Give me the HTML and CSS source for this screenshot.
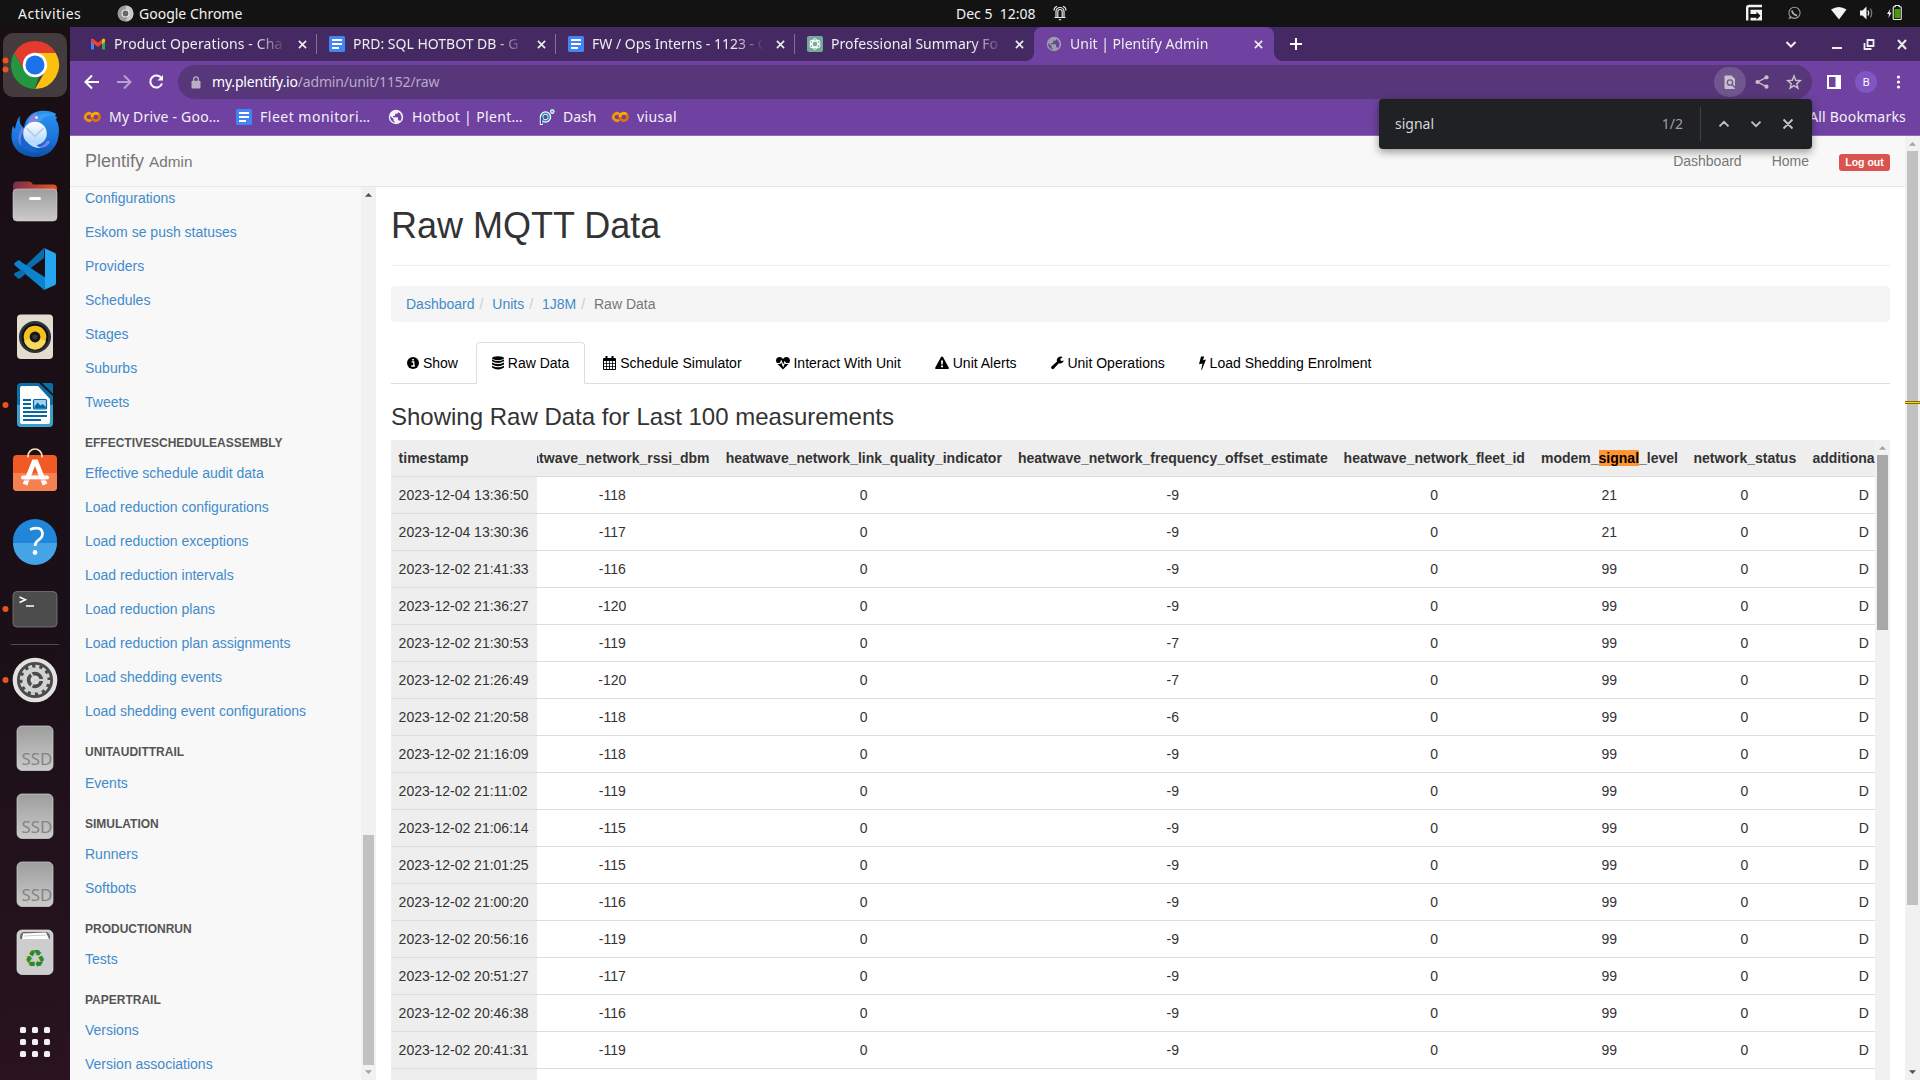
FILE: index.html
```html
<!DOCTYPE html>
<html lang="en">
<head>
<meta charset="utf-8">
<title>Unit | Plentify Admin</title>
<link rel="stylesheet" href="styles.css">
</head>
<body>
<svg class="defs" width="0" height="0" aria-hidden="true">
  <defs>
    <linearGradient id="gGrey" x1="0" y1="0" x2="0" y2="1"><stop offset="0" stop-color="#9d9d9d"/><stop offset="1" stop-color="#cbcbcb"/></linearGradient>
    <linearGradient id="gFolder" x1="0" y1="0" x2="1" y2="0"><stop offset="0" stop-color="#7a2e4e"/><stop offset="1" stop-color="#e95420"/></linearGradient>
    <linearGradient id="gBird" x1="0" y1="0" x2="0" y2="1"><stop offset="0" stop-color="#2a94ee"/><stop offset=".6" stop-color="#1b74dc"/><stop offset="1" stop-color="#0d4fa8"/></linearGradient>
    <linearGradient id="gMail" x1="0" y1="0" x2="0" y2="1"><stop offset="0" stop-color="#fff"/><stop offset="1" stop-color="#a9d4fb"/></linearGradient>
    <symbol id="docs" viewBox="0 0 16 16"><rect width="16" height="16" rx="1.5" fill="#4285f4"/><path d="M3 4h10M3 8h10M3 12h7" stroke="#fff" stroke-width="1.8"/></symbol>
    <symbol id="colab" viewBox="0 0 18 16"><g fill="none" stroke-width="2.7"><path d="M8.2 5.2a3.6 3.6 0 1 0 0 5.6" stroke="#f29900"/><circle cx="12.8" cy="8" r="3.7" stroke="#e8710a"/><path d="M9 8a3.7 3.7 0 0 1 6.5-2.5" stroke="#f9ab00"/></g></symbol>
    <symbol id="globe" viewBox="0 0 16 16"><path fill="currentColor" fill-rule="evenodd" d="M8 .8a7.2 7.2 0 1 0 0 14.400A7.200 7.200 0 0 0 8 .8zM2.300 7l3.200 3v1.200c0 .8.600 1.300 1.300 1.300v1.200A5.800 5.800 0 0 1 2.300 7zm9.800 5.200c-.2-.6-.7-1-1.400-1H10V9c0-.4-.3-.7-.7-.7H5V6.900h1.400c.4 0 .7-.3.7-.7V4.800h1.500c.8 0 1.400-.6 1.400-1.400v-.3a5.800 5.800 0 0 1 2.100 9.100z"/></symbol>
    <symbol id="close" viewBox="0 0 10 10"><path d="M1 1l8 8M9 1L1 9" stroke="currentColor" stroke-width="1.8" fill="none"/></symbol>
    <symbol id="ssd" viewBox="0 0 70 68"><rect x="17" y="12" width="36" height="44.500" rx="5" fill="url(#gGrey)" stroke="#d4d4d4" stroke-width=".7"/><text x="21.500" y="50.500" font-size="15.500" fill="#858585" textLength="31" lengthAdjust="spacingAndGlyphs">SSD</text></symbol>
    <symbol id="up" viewBox="0 0 15 15"><path d="M4 9.700L7.500 6 11 9.700z" fill="currentColor"/></symbol>
    <symbol id="down" viewBox="0 0 15 15"><path d="M4 5.300L7.500 9 11 5.300z" fill="currentColor"/></symbol>
  </defs>
</svg>

<header class="topbar">
  <span class="activities">Activities</span>
  <span class="app"><svg width="17" height="17" viewBox="0 0 17 17"><circle cx="8.500" cy="8.500" r="8" fill="#9a9a9a"/><path d="M8.500.5a8 8 0 0 1 0 16l4-7.500L9 4z" fill="#c9c9c9"/><circle cx="8.500" cy="8.500" r="4" fill="#eee"/><circle cx="8.500" cy="8.500" r="2.900" fill="#666"/></svg><b>Google Chrome</b></span>
  <span class="clock"><b>Dec 5&nbsp; 12:08</b><svg width="14" height="17" viewBox="0 0 14 17" fill="none" stroke="#e8e8e8" stroke-width="1.200"><path d="M1.500 12.500h11M3 12V6.500a4 4 0 0 1 8 0V12M4.800 12V6.700a2.200 2.200 0 0 1 4.400 0V12M1 5.500A4.500 4.500 0 0 1 4 1.300M13 5.500a4.500 4.500 0 0 0-3-4.200"/><path d="M5.500 14h3L7 15.800z" fill="#e8e8e8" stroke="none"/></svg></span>
  <svg class="tray" width="160" height="27" viewBox="0 0 160 27">
    <path d="M4.200 20.500V8q0-2 2-2H19" fill="none" stroke="#f2f2f2" stroke-width="2.400"/><path d="M7.500 9.800H19V20.500H7.500v-2.800h6v2l4-4-4-4v2.200h-6z" fill="#f2f2f2"/>
    <circle cx="51.500" cy="12.800" r="5.600" fill="none" stroke="#9a9a9a" stroke-width="1.100"/><path d="M45.500 19.200l1-3 2 2z" fill="#9a9a9a"/><path d="M49 10.500q.5 4 5 5" fill="none" stroke="#b5b5b5" stroke-width="1.800"/>
    <path d="M88 9.500q8-5 15.500 0L96 19.500z" fill="#f2f2f2"/>
    <path d="M117 10.500h2.500l4-4v13l-4-4H117z" fill="#f2f2f2"/><path d="M125 10.500q1.500 2.500 0 5" fill="none" stroke="#f2f2f2" stroke-width="1.300"/><path d="M127.300 8.500q2.700 4.500 0 9" fill="none" stroke="#777" stroke-width="1.300"/>
    <path d="M147.500 8.500l-3.500 5.500h2l-.5 4 3-5.500h-2z" fill="#f2f2f2"/><path d="M150.200 7.500q0-.8.800-.8h1.200V5.500h4v1.200h1.200q.8 0 .8.800v11.200q0 .8-.8.800h-6.400q-.8 0-.8-.8z" fill="none" stroke="#f2f2f2" stroke-width="1.100"/><rect x="151.500" y="9" width="5.500" height="9" fill="#4e9a06"/>
  </svg>
</header>

<div class="screen">
<nav class="dock">
  <svg class="ico" viewBox="0 0 70 68"><rect x="3" y="2" width="64" height="64" rx="10" fill="#443b3f"/><circle cx="5.500" cy="29.500" r="3" fill="#e95420"/><circle cx="5.500" cy="38.500" r="3" fill="#e95420"/>
    <path d="M14.200 22A24 24 0 0 1 55.800 22H35L24.600 40z" fill="#e33b2e"/><path d="M14.200 22L24.600 40Q29 46 35 46l4 0-4.500 12A24 24 0 0 1 14.200 22z" fill="#23963f"/><path d="M55.800 22A24 24 0 0 1 35 58L45.400 40 45 28 35 22z" fill="#fcc10f"/><circle cx="35" cy="34" r="12.200" fill="#fff"/><circle cx="35" cy="34" r="9.500" fill="#1a73e8"/></svg>
  <svg class="ico" viewBox="0 0 70 68"><path d="M20 17c-1 5 0 9 4 12 1-8 6-16 16-17 6-.6 12 0 16 3l-1 2 2 1-1 3c3 4 3.500 10 2.500 16C57 50 47 58 35 58 21 58 12 49 11.500 38c0-4 .3-8 1.500-11l2 3c1-5 2-10 5-13z" fill="url(#gBird)"/><path d="M28 25c4-9 12-12 27-10l1 1c-6 0-11 1-14 5-3 3-8 2-14 4z" fill="#3d9cf2"/><path d="M27.500 25c1-5 4-9 9-11-1 3 0 5 2 6-3 3-7 3-11 5z" fill="#8a83dd"/><circle cx="36.500" cy="18.500" r="1.300" fill="#fff"/><path d="M23 30c-6 8-4 18 5 22 3 1.500 8 2 12 1-7-2-10-6-11-11z" fill="#1763cf"/><path d="M22 29c-4 6-5 13-1 18-1-8 0-12 4-17z" fill="#6f7ee6"/><path d="M47 42c-2 4-6 6-10 6 6 2 12-1 13-6z" fill="#7d84e8"/><circle cx="35" cy="34.500" r="11.800" fill="url(#gMail)"/><path d="M28 44c3 3 7 5 13 5-3-1-5-3-6-6z" fill="#b9dbfc"/><path d="M26.500 29l8.500 8.500 8.500-8.500" fill="none" stroke="#b4c8e2" stroke-width="1.400"/></svg>
  <svg class="ico" viewBox="0 0 70 68"><path d="M13 19q0-4.500 4-4.500h12q2 0 3 1.500l1 1.500h20q4 0 4 4V34H13z" fill="url(#gFolder)"/><rect x="13" y="22" width="44" height="32" rx="4" fill="url(#gGrey)" stroke="#d0d0d0" stroke-width=".6"/><rect x="29" y="30" width="12" height="3" rx="1.500" fill="#fff"/></svg>
  <svg class="ico" viewBox="0 0 70 68"><path d="M44 13L22 34l22 21V45L29.500 34 44 23z" fill="#0a6dae"/><path d="M22 27.500l-3-2.500-4 2.500q-1.500 1.500 0 3L44.500 55 46 43z" fill="#0b83cd"/><path d="M14.500 38q-1 1.500 0 2.500l3.500 3q1 .5 2 0l6-5-4-4z" fill="#0a6dae"/><path d="M44 13l11 5q1 .6 1 2v28q0 1.400-1 2l-11 5q1-1 1-3V16q0-2-1-3z" fill="#26a5f2"/></svg>
  <svg class="ico" viewBox="0 0 70 68"><rect x="17" y="11.500" width="36" height="44.500" rx="4" fill="#e3ddd0"/><circle cx="35" cy="34" r="16" fill="#2f3238"/><circle cx="35" cy="34" r="13.300" fill="#0e0f11"/><circle cx="35" cy="34" r="11.300" fill="#f2c11c"/><path d="M24 38a11.300 11.300 0 0 0 22 0l-11-4z" fill="#f8d85a"/><circle cx="35" cy="34" r="5.400" fill="#161616"/><circle cx="35" cy="34" r="2.500" fill="#3a3a3a"/></svg>
  <svg class="ico" viewBox="0 0 70 68"><circle cx="5.500" cy="34" r="3" fill="#e95420"/><path d="M21 12h18l14 13v27q0 4-4 4H21q-4 0-4-4V16q0-4 4-4z" fill="#0b6ea5"/><path d="M17 34h36v18q0 4-4 4H21q-4 0-4-4z" fill="#3c9fd0"/><path d="M22 15h16l12 13v23q0 2-2 2H22q-2 0-2-2V17q0-2 2-2z" fill="#fff"/><path d="M42 12h9q2 0 2 2v9z" fill="#0b6ea5"/><path d="M23 29h8M23 33h8M23 37h8M23 41h24M23 45h24M23 49h18" stroke="#0369a3" stroke-width="1.900"/><rect x="33.500" y="28.500" width="13" height="9.500" rx="1" fill="#a3d2ee" stroke="#0369a3" stroke-width="1.200"/><path d="M34.500 37.500v-2l3-4 3 3 2-1.500 3.500 3v1.500z" fill="#0369a3"/></svg>
  <svg class="ico" viewBox="0 0 70 68"><rect x="13" y="16" width="44" height="36" rx="4" fill="#f15a24"/><path d="M13 34h44v14q0 4-4 4H17q-4 0-4-4z" fill="#f58150"/><path d="M28 18.500V17a7 7 0 0 1 14 0v1.500" fill="none" stroke="#f9e2bf" stroke-width="1.700"/><path d="M25 45.500L34 23h2l9 22.500" fill="none" stroke="#fff" stroke-width="4.800"/><path d="M23 38.500h24" stroke="#fff" stroke-width="4" stroke-linecap="round"/><path d="M23 41h24" stroke="#f58150" stroke-width=".8"/></svg>
  <svg class="ico" viewBox="0 0 70 68"><circle cx="35" cy="34" r="22" fill="#1f86d9"/><path d="M13 36a22 22 0 0 0 44 0z" fill="#45a4e6"/><path d="M30 22.500q12-4 12.500 4 0 4-4 6.500-3.500 2.500-3.500 6" fill="none" stroke="#fff" stroke-width="2.700"/><circle cx="35" cy="45.500" r="2.400" fill="#fff"/></svg>
  <svg class="ico" viewBox="0 0 70 68"><circle cx="5.500" cy="34" r="3" fill="#e95420"/><rect x="13" y="16.500" width="44" height="35.500" rx="4" fill="#4c4c4c" stroke="#7b7b7b" stroke-width=".8"/><path d="M19.500 22l6 2.800-6 2.700M26 31h8" fill="none" stroke="#fff" stroke-width="1.500"/></svg>
  <hr>
  <svg class="ico" viewBox="0 0 70 68"><circle cx="5.500" cy="34" r="3" fill="#e95420"/><circle cx="35" cy="34" r="20.200" fill="#4b4b4b" stroke="#e2e2e2" stroke-width="4.300"/><circle cx="35" cy="34" r="13.700" fill="none" stroke="#d2d2d2" stroke-width="3" stroke-dasharray="4 3.170"/><circle cx="35" cy="34" r="10.400" fill="none" stroke="#d2d2d2" stroke-width="4.400"/><circle cx="35" cy="34" r="4.500" fill="#dcdcdc"/><path d="M35 34h10M35 34l-5 8.600M35 34l-5-8.600" stroke="#d2d2d2" stroke-width="1.800"/></svg>
  <svg class="ico"><use href="#ssd"/></svg>
  <svg class="ico"><use href="#ssd"/></svg>
  <svg class="ico"><use href="#ssd"/></svg>
  <svg class="ico" viewBox="0 0 70 68"><rect x="17" y="12" width="36" height="44.500" rx="5" fill="#cdcdcd" stroke="#e2e2e2" stroke-width=".7"/><path d="M20 21v-3q1-4 4-4h22q3 0 4 4v3z" fill="#6b6b6b"/><path d="M22 21l1-5.500 23-1L49 21z" fill="#fff"/><path d="M24 18l22-1" stroke="#bbb" stroke-width=".8"/><text x="35" y="48.500" font-size="24" fill="#2d8a1f" text-anchor="middle" class="recycle">♻</text></svg>
  <svg class="ico apps" viewBox="0 0 70 68" fill="#f2f2f2"><g id="r"><rect x="20" y="19" width="6" height="6" rx="1.600"/><rect x="32" y="19" width="6" height="6" rx="1.600"/><rect x="44" y="19" width="6" height="6" rx="1.600"/></g><use href="#r" y="12"/><use href="#r" y="24"/></svg>
</nav>

<main class="window">
  <div class="tabstrip">
    <div class="tab"><svg width="16" height="16" viewBox="0 0 16 16"><path d="M1 13.500V3.500h3v10z" fill="#4285f4"/><path d="M12 13.500V3.500h3v10z" fill="#34a853"/><path d="M1 3.500q1.500-2 3 0l4 3.300 4-3.300v4L8 11 1 5.800z" fill="#ea4335"/><path d="M12 3.500q1.500-2 3 0v2.300l-3 2.200z" fill="#fbbc04"/></svg><span class="wide">Product Operations - Cha</span><svg class="x"><use href="#close"/></svg></div>
    <div class="tab"><svg width="16" height="16"><use href="#docs"/></svg><span>PRD: SQL HOTBOT DB - G</span><svg class="x"><use href="#close"/></svg></div>
    <div class="tab"><svg width="16" height="16"><use href="#docs"/></svg><span>FW / Ops Interns - 1123 - G</span><svg class="x"><use href="#close"/></svg></div>
    <div class="tab last"><svg width="16" height="16" viewBox="0 0 16 16"><rect width="16" height="16" rx="2" fill="#74aa9c"/><g fill="none" stroke="#fff" stroke-width=".9"><ellipse cx="8" cy="8" rx="2.700" ry="5.400"/><ellipse cx="8" cy="8" rx="2.700" ry="5.400" transform="rotate(60 8 8)"/><ellipse cx="8" cy="8" rx="2.700" ry="5.400" transform="rotate(120 8 8)"/></g></svg><span>Professional Summary Fo</span><svg class="x"><use href="#close"/></svg></div>
    <div class="tab active"><svg class="dim" width="16" height="16"><use href="#globe"/></svg><span>Unit | Plentify Admin</span><svg class="x"><use href="#close"/></svg></div>
    <svg class="plus" width="14" height="14" viewBox="0 0 14 14"><path d="M7 1v12M1 7h12" stroke="#fff" stroke-width="2"/></svg>
    <svg class="winbtns" width="140" height="34" viewBox="0 0 140 34" fill="none" stroke="#eee" stroke-width="2"><path d="M6.500 15l4.500 4.500 4.500-4.500M52 21h10M118 13l8 9M126 13l-8 9"/><path d="M87.500 13h6v6h-6zM84.500 16v6h7" stroke-width="1.800"/></svg>
  </div>

  <div class="toolbar">
    <svg class="navbtns" width="108" height="38" viewBox="0 0 108 38" fill="none" stroke="#fff" stroke-width="2"><path d="M29 21H16M22 14.500L15.500 21l6.500 6.500"/><path d="M47 21h13M54 14.500l6.500 6.500-6.500 6.500" opacity=".5"/><path d="M91.500 17.500A6 6 0 1 0 92 22.500"/><path d="M93 14v5.500h-5.500z" fill="#fff" stroke="none"/></svg>
    <div class="omnibox">
      <svg width="10" height="13" viewBox="0 0 10 13"><rect x=".5" y="4.800" width="9" height="7.700" rx="1" fill="#b9b0c4"/><path d="M2.700 5V3.200a2.300 2.300 0 0 1 4.600 0V5" fill="none" stroke="#b9b0c4" stroke-width="1.300"/></svg>
      <span class="url"><b>my.plentify.io</b>/admin/unit/1152/raw</span>
      <svg class="omniicons" width="100" height="34" viewBox="0 0 100 34"><rect x="2" y="2" width="32" height="30" rx="15" fill="#70558f"/><path d="M13.500 10.500h6l3.500 3.500v10h-9.500q-1 0-1-1V11.500q0-1 1-1z" fill="#c7c1cb"/><circle cx="18" cy="17.500" r="2.700" fill="none" stroke="#70558f" stroke-width="1.300"/><path d="M20 19.500l3.500 3.500" stroke="#70558f" stroke-width="1.300"/><g fill="#c7c1cb"><circle cx="45.500" cy="17" r="2.100"/><circle cx="54.500" cy="12.300" r="2.100"/><circle cx="54.500" cy="21.700" r="2.100"/></g><path d="M54.500 12.300L45.500 17l9 4.700" fill="none" stroke="#c7c1cb" stroke-width="1.300"/><path d="M82 11l1.700 4.300 4.600.3-3.500 3 1.100 4.500-3.900-2.500-3.900 2.500 1.100-4.500-3.500-3 4.600-.3z" fill="none" stroke="#c7c1cb" stroke-width="1.400"/></svg>
    </div>
    <svg class="rightbtns" width="108" height="38" viewBox="0 0 108 38"><path d="M16 15h12v12H16z" fill="none" stroke="#fff" stroke-width="2"/><path d="M23.500 15H28v12h-4.500z" fill="#fff"/><circle cx="54" cy="21" r="11" fill="#7e57c2"/><text x="54" y="25" font-size="11" fill="#fff" text-anchor="middle">B</text><g fill="#fff"><circle cx="86.500" cy="16" r="1.600"/><circle cx="86.500" cy="21" r="1.600"/><circle cx="86.500" cy="26" r="1.600"/></g></svg>
  </div>

  <div class="bookmarks">
    <span class="bm1"><svg width="18" height="16"><use href="#colab"/></svg>My Drive - Goo…</span>
    <span class="bm2"><svg width="16" height="16"><use href="#docs"/></svg>Fleet monitori…</span>
    <span class="bm3"><svg width="16" height="16"><use href="#globe"/></svg>Hotbot | Plent…</span>
    <span class="bm4"><svg width="16" height="16" viewBox="0 0 16 16" fill="none"><circle cx="6.500" cy="8" r="4" stroke="#fff" stroke-width="3.400"/><path d="M2.300 16V8" stroke="#fff" stroke-width="3"/><circle cx="6.500" cy="8" r="3.700" stroke="#1b9fb0" stroke-width="1.600"/><path d="M2.600 15V8" stroke="#4436a8" stroke-width="1.600"/><circle cx="13.300" cy="2.600" r="2.300" fill="#fff"/><circle cx="13.300" cy="2.600" r="1.200" fill="#19c3a6"/></svg>Dash</span>
    <span class="bm5"><svg width="18" height="16"><use href="#colab"/></svg>viusal</span>
    <span class="all">All Bookmarks</span>
  </div>

  <div class="findbar">
    <span class="q">signal</span><span class="n">1/2</span>
    <svg width="112" height="50" viewBox="0 0 112 50" fill="none" stroke="#bdc1c6" stroke-width="1.900"><path d="M.5 8v34" stroke="#3c4043" stroke-width="1"/><path d="M19.500 27.300l4.500-4.500 4.500 4.500M51.500 22.700l4.500 4.500 4.500-4.500M83.500 20.500l9 9M92.500 20.500l-9 9"/></svg>
  </div>

  <div class="page">
    <div class="body">
      <header class="navbar">
        <span class="brand">Plentify <small>Admin</small></span>
        <a class="n1">Dashboard</a><a class="n2">Home</a><a class="logout">Log out</a>
      </header>
      <div class="columns">
        <aside class="sidebar">
          <ul>
            <li>Configurations</li><li>Eskom se push statuses</li><li>Providers</li><li>Schedules</li><li>Stages</li><li>Suburbs</li><li>Tweets</li>
            <li class="head">EFFECTIVESCHEDULEASSEMBLY</li>
            <li>Effective schedule audit data</li><li>Load reduction configurations</li><li>Load reduction exceptions</li><li>Load reduction intervals</li><li>Load reduction plans</li><li>Load reduction plan assignments</li><li>Load shedding events</li><li>Load shedding event configurations</li>
            <li class="head">UNITAUDITTRAIL</li>
            <li>Events</li>
            <li class="head">SIMULATION</li>
            <li>Runners</li><li>Softbots</li>
            <li class="head">PRODUCTIONRUN</li>
            <li>Tests</li>
            <li class="head">PAPERTRAIL</li>
            <li>Versions</li><li>Version associations</li>
          </ul>
          <div class="sb sb-side"><svg class="on"><use href="#up"/></svg><i></i><svg><use href="#down"/></svg></div>
        </aside>

        <section class="content">
          <h1>Raw MQTT Data</h1>
          <ol class="crumbs"><li><a>Dashboard</a></li><li><a>Units</a></li><li><a>1J8M</a></li><li>Raw Data</li></ol>
          <ul class="tabs">
            <li><svg width="12" height="14" viewBox="0 0 12 14"><circle cx="6" cy="7" r="6"/><path d="M4.500 5.800h2.300v4M4.300 10h3.600" stroke="#fff" stroke-width="1.300" fill="none"/><path d="M5.200 3h1.700v1.600H5.200z" fill="#fff"/></svg> Show</li>
            <li class="on"><svg width="12" height="14" viewBox="0 0 12 14"><ellipse cx="6" cy="2.200" rx="6" ry="2"/><path d="M0 3.500q6 3 12 0v1.800q-6 3.600-12 0zM0 6.600q6 3 12 0v1.800q-6 3.600-12 0zM0 9.700q6 3 12 0v1.900q-6 3.800-12 0z"/></svg> Raw Data</li>
            <li><svg width="13" height="14" viewBox="0 0 13 14"><path d="M1 2h11q1 0 1 1v10q0 1-1 1H1q-1 0-1-1V3q0-1 1-1z"/><path d="M1 5h2.200v2H1zM4 5h2.200v2H4zM7 5h2.200v2H7zM10 5h2v2h-2zM1 7.800h2.200v2.200H1zM4 7.800h2.200v2.200H4zM7 7.800h2.200v2.200H7zM10 7.800h2v2.200h-2zM1 10.800h2.200V13H1zM4 10.800h2.200V13H4zM7 10.800h2.200V13H7zM10 10.800h2V13h-2z" fill="#fff"/><path d="M2.500 0h2v3.500h-2zM8.500 0h2v3.500h-2z"/></svg> Schedule Simulator</li>
            <li><svg width="14" height="14" viewBox="0 0 14 14"><path d="M7 13.500L1.500 8Q0 6.300 0 4.500 .2 1 3.700 1 5.800 1 7 3q1.200-2 3.300-2Q13.800 1 14 4.500q0 1.800-1.500 3.500z"/><path d="M0 7.500h4L5.300 5l1.900 5 1.600-4 .9 1.500H14" fill="none" stroke="#fff" stroke-width="1.100"/></svg> Interact With Unit</li>
            <li><svg width="14" height="14" viewBox="0 0 14 14"><path d="M7 .5q.6 0 1 .6l5.800 10.700q.4 1.200-.8 1.200H1Q-.2 13 .2 11.800L6 1.100Q6.400.5 7 .5z"/><path d="M6 4.500h2l-.3 4H6.300zM6 9.500h2v1.800H6z" fill="#fff"/></svg> Unit Alerts</li>
            <li><svg width="13" height="14" viewBox="0 0 13 14"><path d="M12.800 4.500a3.700 3.700 0 0 1-5 2.700L3 12.600Q2 13.600.8 12.700-.5 11.500.5 10.400L6 5.600A3.800 3.800 0 0 1 9.500.6q1.300 0 2.300.6L9.400 2.700v1.600l1.400.8z"/></svg> Unit Operations</li>
            <li><svg width="7" height="14" viewBox="0 0 7 14"><path d="M2 .5h3.200L4 4.300 7 3.500 2.800 14l-.6-.3L3.500 7.500 0 8.300z"/></svg> Load Shedding Enrolment</li>
          </ul>
          <h3>Showing Raw Data for Last 100 measurements</h3>
          <div class="data">
            <table class="stamps">
              <tr><th>timestamp</th></tr>
              <tr><td>2023-12-04 13:36:50</td></tr><tr><td>2023-12-04 13:30:36</td></tr><tr><td>2023-12-02 21:41:33</td></tr><tr><td>2023-12-02 21:36:27</td></tr>
              <tr><td>2023-12-02 21:30:53</td></tr><tr><td>2023-12-02 21:26:49</td></tr><tr><td>2023-12-02 21:20:58</td></tr><tr><td>2023-12-02 21:16:09</td></tr>
              <tr><td>2023-12-02 21:11:02</td></tr><tr><td>2023-12-02 21:06:14</td></tr><tr><td>2023-12-02 21:01:25</td></tr><tr><td>2023-12-02 21:00:20</td></tr>
              <tr><td>2023-12-02 20:56:16</td></tr><tr><td>2023-12-02 20:51:27</td></tr><tr><td>2023-12-02 20:46:38</td></tr><tr><td>2023-12-02 20:41:31</td></tr>
              <tr><td>&nbsp;</td></tr>
            </table>
            <div class="clip">
            <table class="values">
              <colgroup><col class="c1"><col class="c2"><col class="c3"><col class="c4"><col class="c5"><col class="c6"><col class="c7"></colgroup>
              <tr><th>heatwave_network_rssi_dbm</th><th>heatwave_network_link_quality_indicator</th><th>heatwave_network_frequency_offset_estimate</th><th>heatwave_network_fleet_id</th><th>modem_<mark>signal</mark>_level</th><th>network_status</th><th>additional_data</th></tr>
              <tr><td>-118</td><td>0</td><td>-9</td><td>0</td><td>21</td><td>0</td><td>D</td></tr>
              <tr><td>-117</td><td>0</td><td>-9</td><td>0</td><td>21</td><td>0</td><td>D</td></tr>
              <tr><td>-116</td><td>0</td><td>-9</td><td>0</td><td>99</td><td>0</td><td>D</td></tr>
              <tr><td>-120</td><td>0</td><td>-9</td><td>0</td><td>99</td><td>0</td><td>D</td></tr>
              <tr><td>-119</td><td>0</td><td>-7</td><td>0</td><td>99</td><td>0</td><td>D</td></tr>
              <tr><td>-120</td><td>0</td><td>-7</td><td>0</td><td>99</td><td>0</td><td>D</td></tr>
              <tr><td>-118</td><td>0</td><td>-6</td><td>0</td><td>99</td><td>0</td><td>D</td></tr>
              <tr><td>-118</td><td>0</td><td>-9</td><td>0</td><td>99</td><td>0</td><td>D</td></tr>
              <tr><td>-119</td><td>0</td><td>-9</td><td>0</td><td>99</td><td>0</td><td>D</td></tr>
              <tr><td>-115</td><td>0</td><td>-9</td><td>0</td><td>99</td><td>0</td><td>D</td></tr>
              <tr><td>-115</td><td>0</td><td>-9</td><td>0</td><td>99</td><td>0</td><td>D</td></tr>
              <tr><td>-116</td><td>0</td><td>-9</td><td>0</td><td>99</td><td>0</td><td>D</td></tr>
              <tr><td>-119</td><td>0</td><td>-9</td><td>0</td><td>99</td><td>0</td><td>D</td></tr>
              <tr><td>-117</td><td>0</td><td>-9</td><td>0</td><td>99</td><td>0</td><td>D</td></tr>
              <tr><td>-116</td><td>0</td><td>-9</td><td>0</td><td>99</td><td>0</td><td>D</td></tr>
              <tr><td>-119</td><td>0</td><td>-9</td><td>0</td><td>99</td><td>0</td><td>D</td></tr>
            </table>
            </div>
            <div class="sb sb-table"><svg><use href="#up"/></svg><i></i></div>
          </div>
        </section>
      </div>
    </div>
    <div class="sb sb-page"><svg><use href="#up"/></svg><i></i><svg class="on"><use href="#down"/></svg><em></em></div>
  </div>
</main>
</div>
</body>
</html>
```
FILE: styles.css
```css
* { box-sizing: border-box; }
body { margin: 0; width: 1920px; height: 1080px; overflow: hidden; display: flex; flex-direction: column; font: 14px/20px "Liberation Sans", Arial, sans-serif; color: #333; background: #fff; }
ul, ol { list-style: none; margin: 0; padding: 0; }
svg { display: block; flex: none; }
.defs { position: absolute; }

/* desktop top bar */
.topbar { position: relative; height: 27px; flex: none; display: flex; align-items: center; background: #131313; color: #f2f2f2; font: 14px/27px "Noto Sans", sans-serif; padding-left: 18px; }
.topbar b { font-weight: 400; }
.activities { width: 99px; letter-spacing: .5px; }
.app { display: flex; align-items: center; gap: 5px; width: 839px; }
.clock { display: flex; align-items: center; gap: 17px; }
.tray { margin-left: auto; margin-right: 17px; }

.screen { flex: 1; display: flex; min-height: 0; }

/* dock */
.dock { width: 70px; flex: none; padding-top: 4px; display: flex; flex-direction: column; background: linear-gradient(170deg, #190e14 0%, #1b1017 60%, #29131f 100%); font-family: "Noto Sans", sans-serif; }
.ico { width: 70px; height: 68px; }
.dock hr { width: 48px; height: 1px; margin: 1px 11px; border: 0; background: #55494f; flex: none; }
.apps { margin-top: auto; margin-bottom: 4px; }
.recycle { font-family: "DejaVu Sans", sans-serif; }

/* browser chrome */
.window { position: relative; flex: 1; min-width: 0; display: flex; flex-direction: column; font-size: 14px; }
.tabstrip { height: 34px; flex: none; display: flex; align-items: center; background: #452962; padding-left: 8px; }
.tab { position: relative; width: 239px; height: 34px; display: flex; align-items: center; padding-left: 12px; color: #eee; font: 14px/34px "Noto Sans", sans-serif; }
.tab span { width: 172px; margin-left: 8px; overflow: hidden; white-space: nowrap; -webkit-mask-image: linear-gradient(90deg, #000 82%, transparent); mask-image: linear-gradient(90deg, #000 82%, transparent); }
.tab .wide { letter-spacing: .12px; }
.tab .x { width: 9px; height: 9px; margin-left: 11.5px; }
.tab:not(.last):not(.active)::after { content: ""; width: 1px; height: 20px; background: #836f98; margin-left: auto; }
.active { width: 240px; background: #6f42a1; border-radius: 8px 8px 0 0; }
.active::before, .active::after { content: ""; position: absolute; bottom: 0; width: 8px; height: 8px; }
.active::before { left: -8px; background: radial-gradient(circle at 0 0, transparent 7.5px, #6f42a1 8px); }
.active::after { right: -8px; background: radial-gradient(circle at 100% 0, transparent 7.5px, #6f42a1 8px); }
.dim { color: #9aa0a6; }
.plus { margin-left: 15px; }
.winbtns { margin-left: auto; }

.toolbar { height: 38px; flex: none; display: flex; background: #6f42a1; }
.omnibox { flex: 1; height: 34px; margin-top: 4px; border-radius: 17px; background: #57377a; display: flex; align-items: center; padding-left: 13px; }
.url { margin-left: 11px; font: 14px/34px "Noto Sans", sans-serif; letter-spacing: -.17px; color: #b9a9cb; }
.url b { color: #fff; font-weight: 400; }
.omniicons { margin-left: auto; }
.rightbtns { font-family: "Noto Sans", sans-serif; }

.bookmarks { height: 37px; flex: none; display: flex; align-items: center; background: #6f42a1; border-bottom: 1px solid #9168bd; color: #f4f0f8; font: 14px/36px "Noto Sans", sans-serif; padding-left: 13px; }
.bookmarks span { display: flex; align-items: center; gap: 8px; white-space: nowrap; }
.bm1 { width: 153px; letter-spacing: .2px; }
.bm2 { width: 152px; letter-spacing: .5px; }
.bm3 { width: 151px; letter-spacing: .35px; }
.bm4 { width: 72px; }
.bm5 { letter-spacing: .4px; }
.bookmarks .all { margin-left: auto; margin-right: 14px; letter-spacing: .2px; }

.findbar { position: absolute; z-index: 5; left: 1309px; top: 72px; width: 433px; height: 50px; border-radius: 4px; background: #202124; box-shadow: 0 3px 9px rgba(0,0,0,.4); display: flex; color: #d5d7da; font: 14px/50px "Noto Sans", sans-serif; padding-left: 16px; }
.findbar .n { margin-left: auto; margin-right: 17px; color: #9aa0a6; }

/* page */
.page { flex: 1; min-height: 0; display: flex; background: #fff; }
.body { flex: 1; min-width: 0; display: flex; flex-direction: column; }
.navbar { height: 51px; flex: none; display: flex; align-items: center; background: #f8f8f8; border-bottom: 1px solid #e7e7e7; color: #777; padding: 0 15px; }
.brand { font-size: 18px; margin-right: auto; }
.brand small { font-size: 85%; }
.n1 { margin-right: 30px; } .n2 { margin-right: 30px; }
.logout { width: 51px; height: 17px; margin-top: 2px; border-radius: 3px; background: #d9534f; color: #fff; font: bold 10.5px/17px "Liberation Sans", Arial, sans-serif; text-align: center; }
.columns { flex: 1; min-height: 0; display: flex; }
.sidebar { width: 306px; flex: none; overflow: hidden; background: #f8f8f8; display: flex; }
.sidebar ul { flex: 1; margin-top: -5.7px; }
.sidebar li { padding: 7px 15px; color: #428bca; }
.sidebar .head { padding: 16px 15px 4px; font-size: 12px; line-height: 17.14px; font-weight: 700; color: #555; }

.sb { position: relative; width: 15px; flex: none; background: #f1f1f1; display: flex; flex-direction: column; color: #a3a3a3; }
.sb svg { width: 15px; height: 15px; }
.sb svg:last-of-type:not(:first-child) { margin-top: auto; }
.sb .on { color: #505050; }
.sb i { width: 11px; margin-left: 2px; background: #c1c1c1; }
.sb-side i { height: 230px; margin-top: 633px; }
.sb-table i { height: 175px; background: #a8a8a8; }
.sb-page i { height: 754px; }
.sb-page em { position: absolute; left: 0; top: 265px; width: 15px; height: 3px; background: #ffd800; border: solid #8a6a00; border-width: 1px 0; }

.content { flex: 1; min-width: 0; overflow: hidden; padding: 0 15px; }
h1 { margin: 0 0 20px; padding: 19px 0 19px; height: 79px; font-size: 36px; line-height: 40px; font-weight: 400; border-bottom: 1px solid #eee; }
.crumbs { display: flex; height: 36px; padding: 8px 15px; margin-bottom: 20px; border-radius: 4px; background: #f5f5f5; color: #777; }
.crumbs a { color: #428bca; }
.crumbs li + li::before { content: "/\00a0"; padding: 0 5px; color: #ccc; }
.tabs { display: flex; height: 42px; border-bottom: 1px solid #ddd; color: #000; }
.tabs li { height: 42px; padding: 10px 15px; border: 1px solid transparent; margin-right: 2px; white-space: pre; }
.tabs svg { display: inline-block; vertical-align: -2px; }
.tabs .on { background: #fff; border-color: #ddd #ddd #fff; border-radius: 4px 4px 0 0; }
h3 { margin: 20px 0 10px; font-size: 24px; line-height: 26px; font-weight: 400; }
.data { display: flex; height: 640px; overflow: hidden; }
table { border-collapse: separate; border-spacing: 0; table-layout: fixed; flex: none; align-self: flex-start; }
th, td { height: 37px; padding: 8px; line-height: 20px; text-align: center; white-space: nowrap; border-bottom: 1px solid #ddd; }
th { background: #eee; overflow: visible; }
.stamps { width: 146px; }
.stamps td, .stamps th { background: #eee; text-align: left; padding-left: 7.6px; }
.clip { flex: 1; min-width: 0; overflow: hidden; }
.values { width: 1417px; margin-left: -30px; }
.c1 { width: 210.5px; } .c2 { width: 292.5px; } .c3 { width: 325.5px; } .c4 { width: 197.5px; } .c5 { width: 152.5px; } .c6 { width: 118px; } .c7 { width: 120.5px; }
mark { background: #ff9632; color: #000; }
```
